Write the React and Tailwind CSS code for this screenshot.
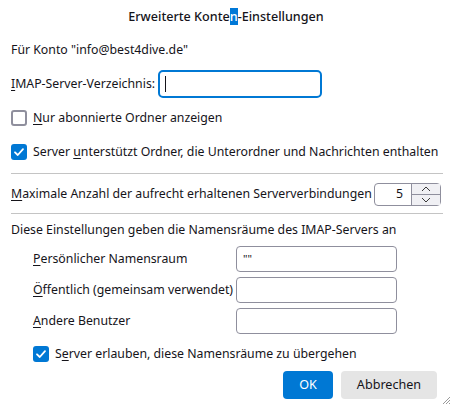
import React from "react";

const font = { fontFamily: '"Noto Sans", "Open Sans", sans-serif' };

function Key({ children }) {
  return <span className="underline underline-offset-2">{children}</span>;
}

function Check({ checked }) {
  if (checked) {
    return (
      <span className="flex h-4 w-4 shrink-0 items-center justify-center rounded-[3px] bg-[#0078d4]">
        <svg width="12" height="12" viewBox="0 0 12 12" fill="none">
          <path d="M2 6.3 L4.8 9 L10 3.2" stroke="white" strokeWidth="1.8" strokeLinecap="round" strokeLinejoin="round" />
        </svg>
      </span>
    );
  }
  return <span className="h-4 w-4 shrink-0 rounded-[3px] border-2 border-[#8f8f9d] bg-white" />;
}

function TextBox({ value }) {
  return (
    <div className="flex h-[26px] w-[161px] items-center rounded-[4px] border border-[#8f8f9d] bg-white px-[6px] text-[11px] text-[#15141a]">
      {value}
    </div>
  );
}

export default function App() {
  return (
    <div
      className="relative flex h-[406px] w-[452px] flex-col whitespace-nowrap bg-white pl-[11px] pr-[9px] text-[12.3px] leading-[18px] text-[#15141a]"
      style={font}
    >
      <div className="flex h-[34px] items-center justify-center pr-[2px] text-[12.6px] font-medium">
        <span>
          Erweiterte Konte<span className="bg-[#0078d7] text-white">n</span>-Einstellungen
        </span>
      </div>

      <div className="mt-[7px] h-[18px]">Für Konto "info@best4dive.de"</div>

      <div className="mt-[11px] flex h-[28px] items-center gap-[4px]">
        <span className="w-[143px]">
          <Key>I</Key>MAP-Server-Verzeichnis:
        </span>
        <div className="flex h-[28px] w-[164px] items-center rounded-[5px] border-2 border-[#0078d4] px-[5px]">
          <span className="h-[16px] w-px bg-[#15141a]" />
        </div>
      </div>

      <div className="mt-[10px] flex h-[20px] items-center gap-[6px]">
        <Check />
        <span>
          <Key>N</Key>ur abonnierte Ordner anzeigen
        </span>
      </div>

      <div className="mt-[14px] flex h-[20px] items-center gap-[6px]">
        <Check checked />
        <span>
          Server <Key>u</Key>nterstützt Ordner, die Unterordner und Nachrichten enthalten
        </span>
      </div>

      <div className="mt-[11px] h-px w-[432px] bg-[#c4c4c4]" />

      <div className="mt-[9px] flex h-[22px] w-[430px] items-center justify-between">
        <span>
          <Key>M</Key>aximale Anzahl der aufrecht erhaltenen Serververbindungen
        </span>
        <div className="flex h-[23px] w-[67px] rounded-[4px] border border-[#8f8f9d]">
          <div className="flex flex-1 items-center justify-end pr-[8px]">5</div>
          <div className="flex w-[29px] flex-col border-l border-[#8f8f9d]">
            <div className="flex flex-1 items-center justify-center border-b border-[#8f8f9d] bg-[#f0f0f4]">
              <svg width="10" height="6" viewBox="0 0 10 6" fill="none">
                <path d="M1 5 L5 1 L9 5" stroke="#3a3a3a" strokeWidth="1" />
              </svg>
            </div>
            <div className="flex flex-1 items-center justify-center bg-[#f0f0f4]">
              <svg width="10" height="6" viewBox="0 0 10 6" fill="none">
                <path d="M1 1 L5 5 L9 1" stroke="#3a3a3a" strokeWidth="1" />
              </svg>
            </div>
          </div>
        </div>
      </div>

      <div className="mt-[8px] h-px w-[432px] bg-[#c4c4c4]" />

      <div className="mt-[7px] h-[18px]">Diese Einstellungen geben die Namensräume des IMAP-Servers an</div>

      <div className="mt-[7px] flex flex-col gap-[5px] pl-[22px]">
        <div className="flex items-center">
          <span className="w-[203px]">
            <Key>P</Key>ersönlicher Namensraum
          </span>
          <TextBox value={'""'} />
        </div>
        <div className="flex items-center">
          <span className="w-[203px]">
            <Key>Ö</Key>ffentlich (gemeinsam verwendet)
          </span>
          <TextBox />
        </div>
        <div className="flex items-center">
          <span className="w-[203px]">
            <Key>A</Key>ndere Benutzer
          </span>
          <TextBox />
        </div>
      </div>

      <div className="mt-[10px] flex h-[20px] items-center gap-[6px] pl-[22px]">
        <Check checked />
        <span>
          S<Key>e</Key>rver erlauben, diese Namensräume zu übergehen
        </span>
      </div>

      <div className="mt-[7px] flex justify-end gap-[8px] pr-[6px]">
        <button className="h-[28px] w-[50px] rounded-[4px] bg-[#0078d4] text-[12.6px] text-white">OK</button>
        <button className="h-[28px] w-[96px] rounded-[4px] bg-[#e5e5e5] text-[12.6px] text-[#15141a]">Abbrechen</button>
      </div>

      <svg className="absolute bottom-[2px] right-[2px]" width="8" height="8" viewBox="0 0 8 8">
        <path d="M8 1 L1 8 M8 4 L4 8 M8 7 L7 8" stroke="#9a9a9a" strokeWidth="1" />
      </svg>
    </div>
  );
}
